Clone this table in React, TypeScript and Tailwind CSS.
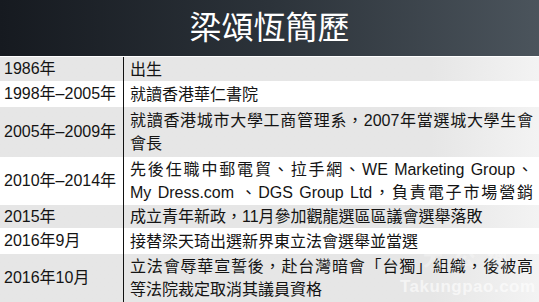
const FONT = "font-['Liberation_Sans','Noto_Sans_CJK_TC',sans-serif]";

type Row = {
	year: string;
	lines: string[];
	justify?: boolean[];
	h: string;
	gray: boolean;
};

const ROWS: Row[] = [
	{ year: "1986年", lines: ["出生"], h: "h-[24px]", gray: true },
	{ year: "1998年–2005年", lines: ["就讀香港華仁書院"], h: "h-[26px]", gray: false },
	{
		year: "2005年–2009年",
		lines: ["就讀香港城市大學工商管理系，2007年當選城大學生會", "會長"],
		justify: [true, false],
		h: "h-[50px]",
		gray: true,
	},
	{
		year: "2010年–2014年",
		lines: [
			"先後任職中郵電貿、拉手網、WE Marketing Group、",
			"My Dress.com 、DGS Group Ltd，負責電子市場營銷",
		],
		justify: [true, true],
		h: "h-[48px]",
		gray: false,
	},
	{
		year: "2015年",
		lines: ["成立青年新政，11月參加觀龍選區區議會選舉落敗"],
		h: "h-[23px]",
		gray: true,
	},
	{
		year: "2016年9月",
		lines: ["接替梁天琦出選新界東立法會選舉並當選"],
		h: "h-[26px]",
		gray: false,
	},
	{
		year: "2016年10月",
		lines: ["立法會辱華宣誓後，赴台灣暗會「台獨」組織，後被高", "等法院裁定取消其議員資格"],
		justify: [true, false],
		h: "h-[48px]",
		gray: true,
	},
];

export default function App() {
	return (
		<div className={`relative h-[302px] w-[539px] overflow-hidden bg-white ${FONT}`}>
			{/* Title bar */}
			<div className="flex h-[56px] items-center justify-center bg-gradient-to-r from-[#161a20] via-[#2c333a] to-[#4b545c] pb-[6px]">
				<h1 className="font-['Noto_Sans_CJK_TC',sans-serif] text-[32px] font-normal leading-none text-white">
					梁頌恆簡歷
				</h1>
			</div>
			<div className="h-px bg-white" />

			{/* Timeline table */}
			<div className="flex flex-col">
				{ROWS.map((row) => (
					<div
						key={row.year}
						className={`flex ${row.h} ${
							row.gray
								? "bg-gradient-to-r from-[#e6e6e6] via-[#e6e6e6] via-80% to-[#f3f3f3]"
								: "bg-white"
						}`}
					>
						<div className="flex w-[123px] shrink-0 items-center pl-[4px] text-[16px] text-[#141414]">
							{row.year}
						</div>
						<div className="w-px shrink-0 bg-[#111]" />
						<div className="flex min-w-0 flex-1 flex-col justify-center pl-[6px] pr-[6px] text-[16px] leading-[23px] text-[#141414]">
							{row.lines.map((line, i) => (
								<div
									key={line}
									className={
										row.justify?.[i]
											? "text-justify [text-align-last:justify]"
											: ""
									}
								>
									{line}
								</div>
							))}
						</div>
					</div>
				))}
			</div>

			{/* Watermark */}
			<div className="pointer-events-none absolute right-[20px] top-[243px] font-['Noto_Sans_CJK_TC',serif] text-[20px] font-bold tracking-[12px] text-white/30">
				大公網
			</div>
			<div className="pointer-events-none absolute left-[400px] top-[274px] text-[17px] font-bold tracking-[0.5px] text-white/60">
				Takungpao.com
			</div>
		</div>
	);
}
